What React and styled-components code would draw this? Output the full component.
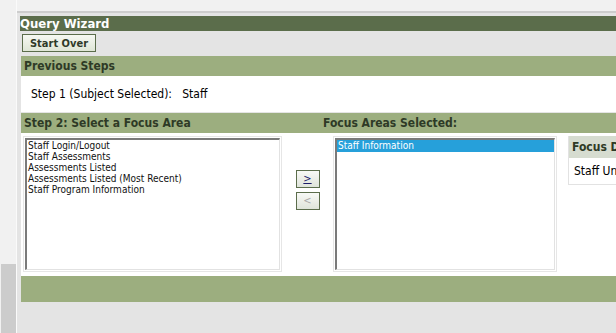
import styled, { createGlobalStyle } from "styled-components";

const Global = createGlobalStyle`
html, body {
  margin: 0;
  padding: 0;
  background: #f1f1f1;
  overflow: hidden;
  font-family: "DejaVu Sans Condensed", "DejaVu Sans", sans-serif;
}
`;

const Page = styled.div`
display: flex;
width: 616px;
height: 333px;
`;

const Gutter = styled.div`
width: 16px;
display: flex;
flex-direction: column;
justify-content: flex-end;
border-right: 1px solid #fafafa;
`;

const Thumb = styled.div`
height: 69px;
margin-left: 1px;
background: #cccccc;
`;

const Main = styled.div`
flex: 1;
min-width: 0;
margin-top: 11px;
border-top: 2px solid #cdcdcd;
background: #e4e4e4;
padding: 3px 0 0 3px;
overflow: hidden;
`;

const Title = styled.div`
height: 15px;
background: #5b6d4b;
color: #fff;
font-weight: bold;
font-size: 13px;
line-height: 15px;
white-space: nowrap;
`;

const StartButton = styled.button`
margin: 3px 0 4px 2px;
width: 74px;
height: 18px;
padding: 0;
border: 1px solid #5b6d4b;
background: linear-gradient(#f6f8f2, #dfe6d6);
color: #2f3a28;
font-family: inherit;
font-weight: bold;
font-size: 11px;
line-height: 15px;
display: block;
`;

const Bar = styled.div`
margin-left: 1px;
height: ${p => p.h || 20}px;
background: #9cae7f;
color: #2e3a26;
font-weight: bold;
font-size: 12px;
line-height: 20px;
display: flex;
white-space: nowrap;
`;

const BarLabel = styled.div`
padding-left: 3px;
width: ${p => p.w ? p.w + "px" : "auto"};
flex-shrink: 0;
`;

const StepsPanel = styled.div`
margin-left: 1px;
height: 36px;
background: #fff;
border-bottom: 1px solid #e4e4e4;
display: flex;
align-items: center;
padding-left: 10px;
font-size: 12px;
color: #000;
white-space: pre;
`;

const PickArea = styled.div`
margin-left: 1px;
height: 143px;
background: #fff;
display: flex;
align-items: flex-start;
padding: 3px 0 0 2px;
box-sizing: border-box;
`;

const ListBox = styled.div`
width: ${p => p.w}px;
height: 136px;
box-sizing: border-box;
border: 1px solid #e6e6e6;
padding: 1px;
flex-shrink: 0;
`;

const ListInner = styled.div`
height: 100%;
box-sizing: border-box;
border-top: 2px solid #7a7a7a;
border-left: 2px solid #7a7a7a;
border-right: 1px solid #e2e2e2;
border-bottom: 1px solid #e2e2e2;
font-size: 10px;
line-height: 11px;
color: #111;
`;

const Option = styled.div`
padding-left: 1px;
height: ${p => p.sel ? 12 : 11}px;
background: ${p => p.sel ? "#26a0da" : "transparent"};
color: ${p => p.sel ? "#fff" : "#111"};
white-space: nowrap;
`;

const Arrows = styled.div`
width: 51px;
flex-shrink: 0;
display: flex;
flex-direction: column;
align-items: center;
gap: 4px;
padding-top: 34px;
`;

const ArrowBtn = styled.button`
width: 24px;
height: 18px;
padding: 0;
border: 1px solid #5b6d4b;
background: linear-gradient(#f8f9f6, #dfe4da);
font-family: inherit;
font-size: 11px;
line-height: 14px;
color: ${p => p.disabled ? "#a9a9a9" : "#1c1c6a"};
text-decoration: ${p => p.disabled ? "none" : "underline"};
`;

const FocusPanel = styled.div`
margin-left: 11px;
width: 120px;
flex-shrink: 0;
border: 1px solid #e2e2e2;
border-top: none;
`;

const FocusHead = styled.div`
height: 22px;
background: #d6dcd0;
font-weight: bold;
font-size: 12px;
line-height: 22px;
padding-left: 3px;
color: #2e3a26;
white-space: nowrap;
`;

const FocusBody = styled.div`
height: 26px;
background: #fff;
font-size: 12px;
line-height: 26px;
padding-left: 5px;
white-space: nowrap;
`;

const left = [
  "Staff Login/Logout",
  "Staff Assessments",
  "Assessments Listed",
  "Assessments Listed (Most Recent)",
  "Staff Program Information",
];

export default function App() {
  return (
    <Page>
      <Global />
      <Gutter>
        <Thumb />
      </Gutter>
      <Main>
        <Title>Query Wizard</Title>
        <StartButton>Start Over</StartButton>
        <Bar>
          <BarLabel>Previous Steps</BarLabel>
        </Bar>
        <StepsPanel>{"Step 1 (Subject Selected):   Staff"}</StepsPanel>
        <Bar>
          <BarLabel w={296}>Step 2: Select a Focus Area</BarLabel>
          <BarLabel>Focus Areas Selected:</BarLabel>
        </Bar>
        <PickArea>
          <ListBox w={259}>
            <ListInner>
              {left.map(t => <Option key={t}>{t}</Option>)}
            </ListInner>
          </ListBox>
          <Arrows>
            <ArrowBtn>&gt;</ArrowBtn>
            <ArrowBtn disabled>&lt;</ArrowBtn>
          </Arrows>
          <ListBox w={224}>
            <ListInner>
              <Option sel>Staff Information</Option>
            </ListInner>
          </ListBox>
          <FocusPanel>
            <FocusHead>Focus Definition</FocusHead>
            <FocusBody>Staff Unique ID</FocusBody>
          </FocusPanel>
        </PickArea>
        <Bar h={26} />
      </Main>
    </Page>
  );
}
